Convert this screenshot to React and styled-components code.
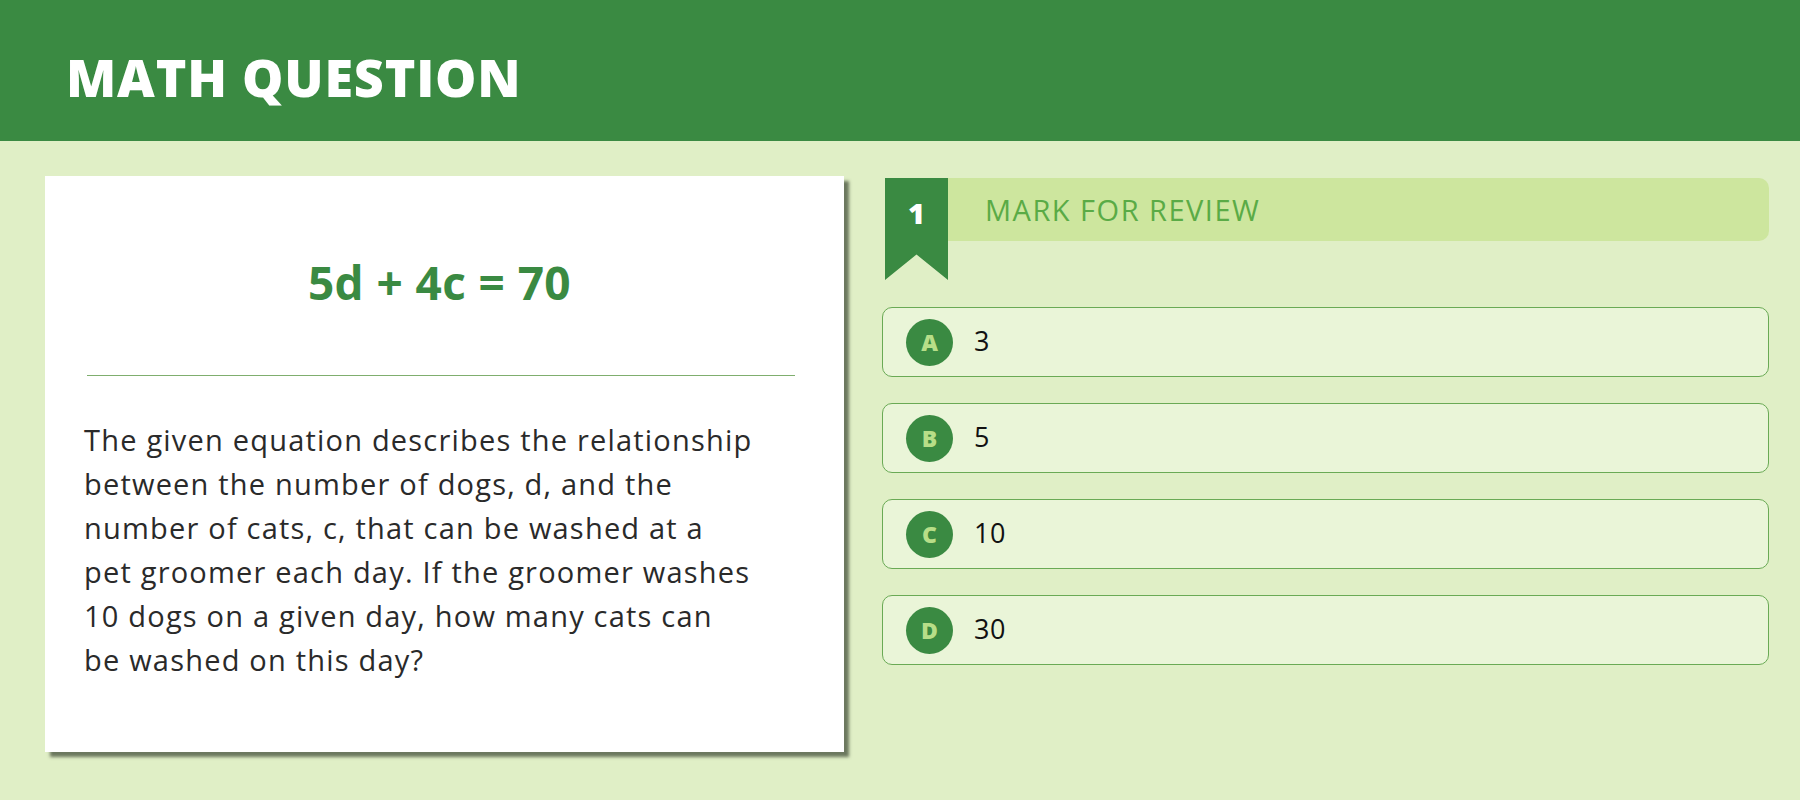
import styled, { createGlobalStyle } from 'styled-components'

const GlobalStyle = createGlobalStyle`
    html, body {
        margin: 0;
        padding: 0;
        background: #e0efc6;
        font-family: "Open Sans", "Liberation Sans", sans-serif;
    }
`

const options = [
    { letter: 'A', value: '3' },
    { letter: 'B', value: '5' },
    { letter: 'C', value: '10' },
    { letter: 'D', value: '30' },
]

const questionLines = [
    'The given equation describes the relationship',
    'between the number of dogs, d, and the',
    'number of cats, c, that can be washed at a',
    'pet groomer each day. If the groomer washes',
    '10 dogs on a given day, how many cats can',
    'be washed on this day?',
]

export default function App(){
    return(
        <Page>
            <GlobalStyle />
            <Header>
                <Title>MATH QUESTION</Title>
            </Header>
            <Main>
                <QuestionCard>
                    <Equation>5d + 4c = 70</Equation>
                    <Divider />
                    <Question>
                        {questionLines.map((line, i) => (
                            <span key={i}>{line}<br /></span>
                        ))}
                    </Question>
                </QuestionCard>

                <AnswerColumn>
                    <ReviewRow>
                        <Ribbon>1</Ribbon>
                        <ReviewBar>MARK FOR REVIEW</ReviewBar>
                    </ReviewRow>
                    <OptionList>
                        {options.map(o => (
                            <Option key={o.letter}>
                                <Letter>{o.letter}</Letter>
                                <Value>{o.value}</Value>
                            </Option>
                        ))}
                    </OptionList>
                </AnswerColumn>
            </Main>
        </Page>
    )
}

const Page = styled.div`
    min-height: 800px;
    background: #e0efc6;
`

const Header = styled.header`
    height: 141px;
    background: #3a8a42;
    display: flex;
    align-items: center;
    padding-left: 66px;
    box-sizing: border-box;
`

const Title = styled.h1`
    margin: 0;
    color: #fff;
    font-size: 52px;
    font-weight: 800;
    letter-spacing: 0.8px;
    padding-top: 12px;
`

const Main = styled.main`
    display: grid;
    grid-template-columns: 799px 1fr;
    column-gap: 38px;
    padding: 35px 31px 0 45px;
`

const QuestionCard = styled.section`
    background: #fff;
    height: 576px;
    box-sizing: border-box;
    padding: 78px 49px 0 39px;
    box-shadow: 5px 5px 3px rgba(70, 80, 60, 0.75);
`

const Equation = styled.div`
    text-align: center;
    color: #3a8a42;
    font-size: 46px;
    font-weight: 700;
    line-height: 56px;
    letter-spacing: 0.4px;
`

const Divider = styled.hr`
    border: 0;
    height: 1px;
    background: #7fae6e;
    margin: 65px 0 42px 3px;
`

const Question = styled.p`
    margin: 0;
    font-size: 29px;
    font-weight: 400;
    line-height: 44px;
    color: #2a2a2a;
    letter-spacing: 1.2px;
`

const AnswerColumn = styled.section`
    padding-top: 2px;
`

const ReviewRow = styled.div`
    display: flex;
    align-items: flex-start;
    margin-left: 3px;
`

const Ribbon = styled.div`
    width: 63px;
    height: 102px;
    flex: none;
    background: #3a8a42;
    clip-path: polygon(0 0, 100% 0, 100% 100%, 50% 75%, 0 100%);
    color: #fff;
    font-size: 29px;
    font-weight: 800;
    text-align: center;
    line-height: 70px;
`

const ReviewBar = styled.div`
    flex: 1;
    height: 63px;
    background: #cde69e;
    border-radius: 0 10px 10px 0;
    display: flex;
    align-items: center;
    padding-left: 37px;
    color: #5aab46;
    font-size: 29px;
    font-weight: 400;
    letter-spacing: 1.5px;
`

const OptionList = styled.div`
    display: flex;
    flex-direction: column;
    gap: 26px;
    margin-top: 27px;
`

const Option = styled.div`
    height: 70px;
    box-sizing: border-box;
    border: 1px solid #6aaa55;
    border-radius: 10px;
    background: #eaf5d8;
    display: flex;
    align-items: center;
    padding-left: 23px;
    gap: 21px;
`

const Letter = styled.span`
    width: 47px;
    height: 47px;
    border-radius: 50%;
    background: #3a8a42;
    color: #b7de88;
    font-size: 23px;
    font-weight: 800;
    display: flex;
    align-items: center;
    justify-content: center;
`

const Value = styled.span`
    font-size: 27px;
    color: #111;
    letter-spacing: 0.5px;
    padding-bottom: 3px;
`
